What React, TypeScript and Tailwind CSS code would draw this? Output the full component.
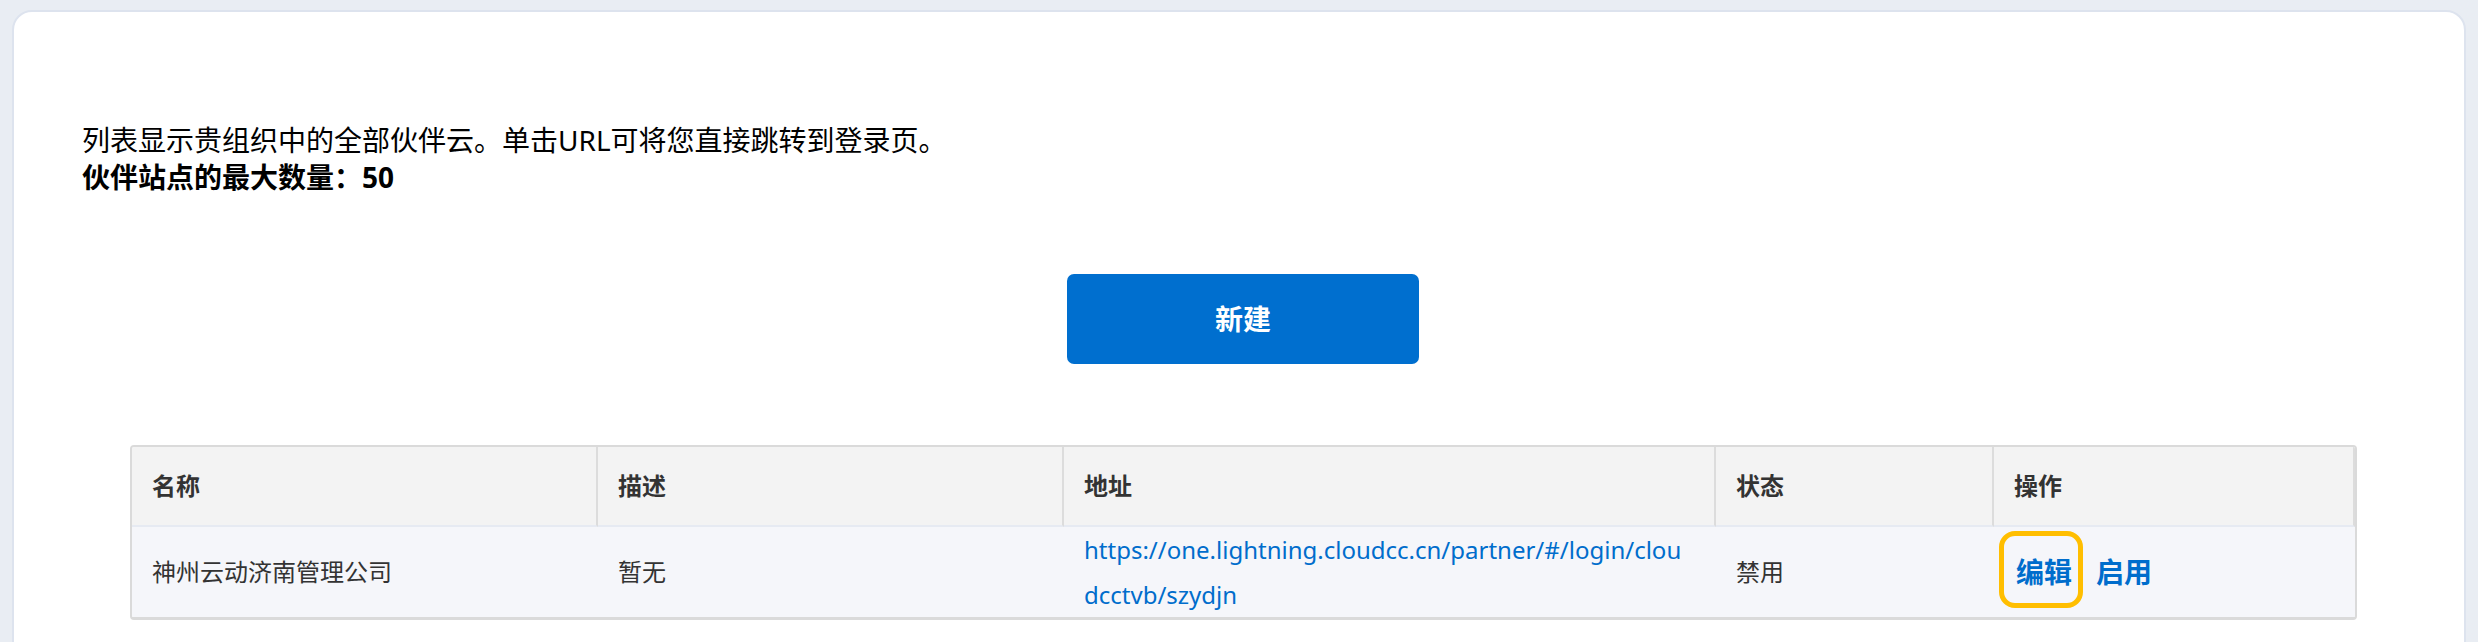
const columns = ["名称", "描述", "地址", "状态", "操作"];

export default function App() {
  return (
    <div className="min-h-screen bg-[#e9edf3] px-[12px] pt-[10px] font-['Noto_Sans','Noto_Sans_CJK_SC',sans-serif]">
      <div className="rounded-[20px] border-2 border-[#dde3ee] bg-white pb-[60px]">
        {/* intro */}
        <div className="pl-[68px] pt-[110px] text-[28px] leading-[37px] text-black">
          <p>列表显示贵组织中的全部伙伴云。单击URL可将您直接跳转到登录页。</p>
          <p className="font-bold">伙伴站点的最大数量：50</p>
        </div>

        <div className="mt-[78px] flex justify-center pl-[8px]">
          <button className="h-[90px] w-[352px] rounded-[7px] bg-[#006fcf] text-[28px] font-bold text-white">
            新建
          </button>
        </div>

        {/* partner sites table */}
        <div className="ml-[116px] mt-[81px] w-[2227px] overflow-hidden rounded-[4px] border-2 border-b-[3px] border-[#dadada]">
          <div className="grid grid-cols-[466px_466px_652px_278px_1fr]">
            {columns.map((c) => (
              <div
                key={c}
                className="flex h-[80px] items-center border-r-2 border-b-2 border-r-[#dcdcdc] border-b-[#e6eaf2] bg-[#f3f3f3] pl-5 text-[24px] font-bold text-[#333]"
              >
                {c}
              </div>
            ))}

            <div className="flex h-[90px] items-center bg-[#f5f6fa] pl-5 text-[24px] text-[#333]">
              神州云动济南管理公司
            </div>
            <div className="flex items-center bg-[#f5f6fa] pl-5 text-[24px] text-[#333]">暂无</div>
            <div className="bg-[#f5f6fa] pl-5 pr-[30px] text-[24px] leading-[45px]">
              <a href="#" className="break-all text-[#006dcc]">
                https://one.lightning.cloudcc.cn/partner/#/login/cloudcctvb/szydjn
              </a>
            </div>
            <div className="flex items-center bg-[#f5f6fa] pl-5 text-[24px] text-[#333]">禁用</div>
            <div className="flex items-center bg-[#f5f6fa] pl-[22px] text-[28px] font-bold leading-[28px] text-[#006dcc]">
              <a href="#" className="relative">
                编辑
                <span className="absolute left-[-17px] right-[-11px] top-[-27px] bottom-[-22px] rounded-[16px] border-[5px] border-[#ffbe00]"></span>
              </a>
              <a href="#" className="ml-[24px]">
                启用
              </a>
            </div>
          </div>
        </div>
      </div>
    </div>
  );
}
